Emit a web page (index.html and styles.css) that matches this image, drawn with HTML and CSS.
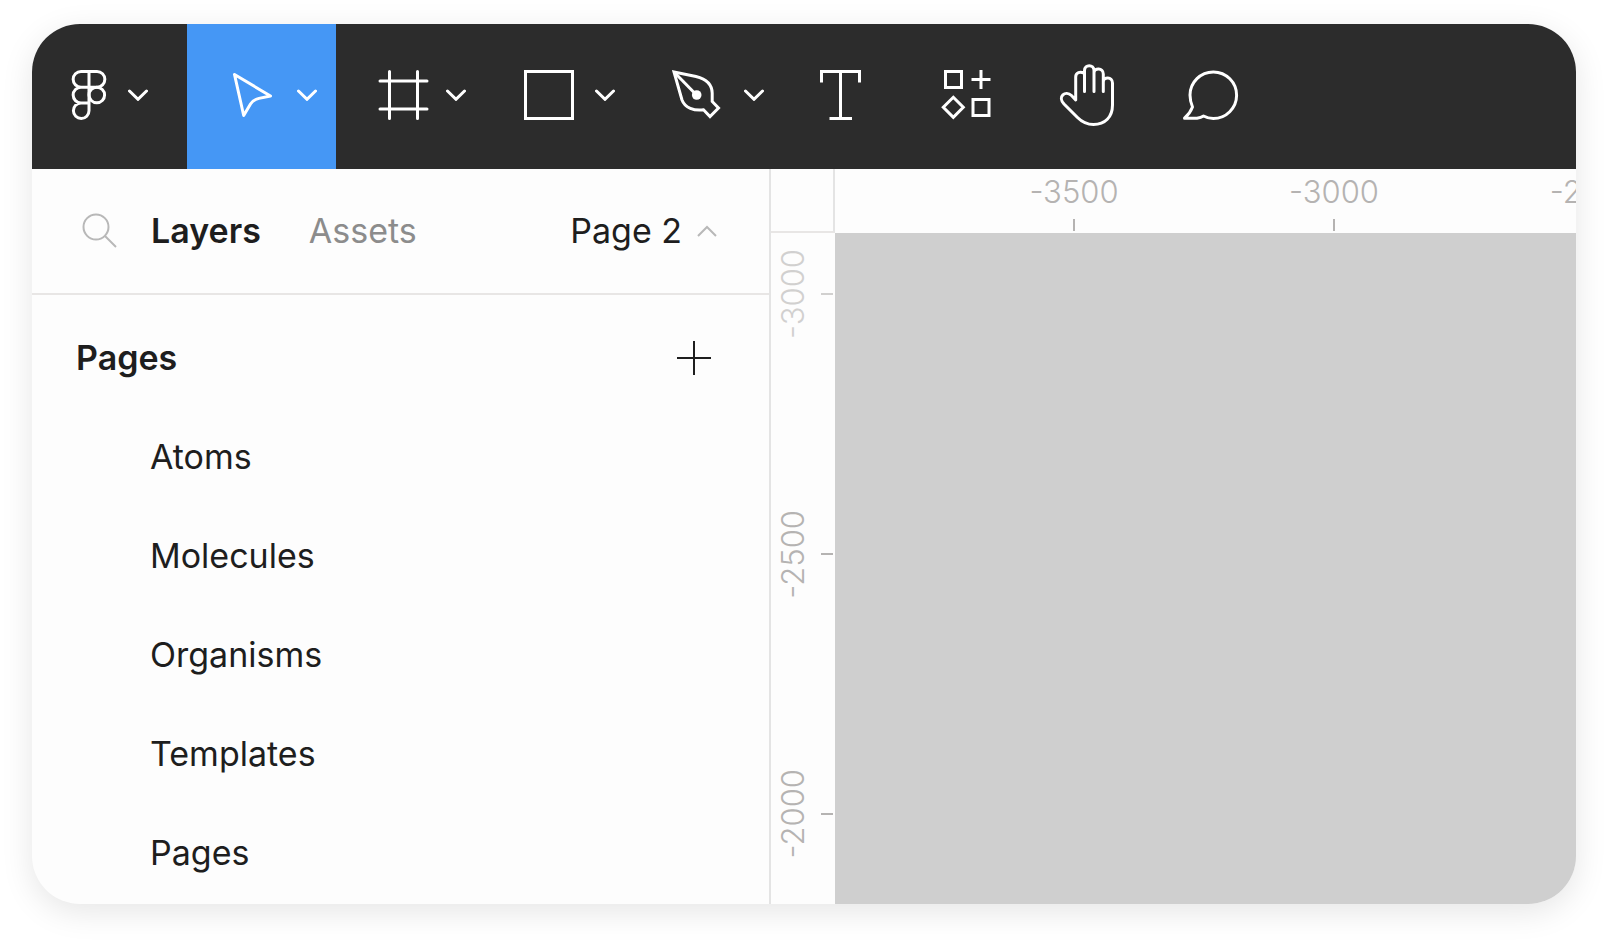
FILE: index.html
```html
<!DOCTYPE html>
<html lang="en">

<head>
    <meta charset="UTF-8">
    <meta name="viewport" content="width=device-width, initial-scale=1.0">
    <title>Design editor</title>
    <link rel="stylesheet" href="styles.css">
</head>

<body>
    <div class="window">
        <header class="toolbar">
            <button class="tool menu" aria-label="Main menu">
                <svg class="icon" viewBox="0 0 52 64">
                    <path d="M26 8.5H18a7.8 7.8 0 0 0 0 15.7H26zM26 8.5H34a7.8 7.8 0 0 1 0 15.7H26zM26 24.2H18a7.8 7.8 0 0 0 0 15.7H26zM26 39.9H18a7.8 7.8 0 1 0 8 7.8z" />
                    <circle cx="33.8" cy="32" r="7.8" />
                </svg>
                <svg class="chevron" viewBox="0 0 20 12"><path d="M1.5 2L10 10.3L18.5 2" /></svg>
            </button>
            <button class="tool active" aria-label="Move">
                <svg class="icon" viewBox="0 0 64 64">
                    <path d="M14.5 11.5L50.5 33L39 35.4Q33.5 36.5 30.5 41L23.7 52.5Z" />
                </svg>
                <svg class="chevron" viewBox="0 0 20 12"><path d="M1.5 2L10 10.3L18.5 2" /></svg>
            </button>
            <button class="tool" aria-label="Frame">
                <svg class="icon" viewBox="0 0 64 64">
                    <path d="M20.5 8.5V55.5M48.5 8.5V55.5M11 18H58M11 46H58" />
                </svg>
                <svg class="chevron" viewBox="0 0 20 12"><path d="M1.5 2L10 10.3L18.5 2" /></svg>
            </button>
            <button class="tool" aria-label="Rectangle">
                <svg class="icon sharp" viewBox="0 0 64 64">
                    <rect x="7.5" y="8.5" width="47" height="47" />
                </svg>
                <svg class="chevron" viewBox="0 0 20 12"><path d="M1.5 2L10 10.3L18.5 2" /></svg>
            </button>
            <button class="tool" aria-label="Pen">
                <svg class="icon sharp" viewBox="0 0 64 64">
                    <path d="M7 9L29 13.5C39 16 45 22 45.2 30V38.5L51.5 45L43 53.5L36.5 46.8C27 48 18 45 15 37Z" />
                    <path d="M7 9L29 31.5" />
                    <circle class="dot" cx="29.7" cy="32" r="4.8" />
                </svg>
                <svg class="chevron" viewBox="0 0 20 12"><path d="M1.5 2L10 10.3L18.5 2" /></svg>
            </button>
            <button class="tool plain" aria-label="Text">
                <svg class="icon sharp" viewBox="0 0 64 64">
                    <path d="M9.5 19.5V8.5H47.5V19.5M28.5 8.5V55.5M17.5 55.5H40" />
                </svg>
            </button>
            <button class="tool plain" aria-label="Resources">
                <svg class="icon sharp" viewBox="0 0 64 64">
                    <rect x="11.5" y="8.5" width="16" height="16" />
                    <rect x="39" y="36.5" width="16" height="16" />
                    <path d="M47 7V26M37.5 16.5H56.5M19.3 34.3L29.3 44.3L19.3 54.3L9.3 44.3Z" />
                </svg>
            </button>
            <button class="tool plain" aria-label="Hand">
                <svg class="icon" viewBox="0 0 64 64">
                    <path d="M28.5 28.5V7.5C28.5 1 38 1 38 7.5V28.5M38 10C38 4.5 47.3 4.5 47.3 11V28.5M47.3 19C47.3 13.5 56.5 13.5 56.5 20V42C56.5 54 49 61.5 37.5 61.5C30 61.5 26 59 21.5 54.5L8 41C1 33.5 9.5 27 15.5 32.5L19.7 37V14C19.7 9.5 24 8 28.5 10.5" />
                </svg>
            </button>
            <button class="tool plain" aria-label="Comment">
                <svg class="icon" viewBox="0 0 64 64">
                    <path d="M14.5 44Q12 38 12 32A23.3 23.3 0 1 1 35.3 55.5Q30 55.5 25.5 53Q23 54.5 19 55.2H6.5Q12 50.5 14.5 44Z" />
                </svg>
            </button>
        </header>

        <main class="workspace">
            <aside class="sidebar">
                <nav class="tabs">
                    <button class="search" aria-label="Search">
                        <svg viewBox="0 0 36 36"><circle cx="14" cy="14" r="12.5" /><path d="M23 23L34 34" /></svg>
                    </button>
                    <button class="tab selected">Layers</button>
                    <button class="tab">Assets</button>
                    <button class="tab page-switch">Page 2
                        <svg class="chevron" viewBox="0 0 20 12"><path d="M1 11L10 2L19 11" /></svg>
                    </button>
                </nav>
                <section class="pages">
                    <div class="pages-head">
                        <h2>Pages</h2>
                        <button class="add" aria-label="Add page">
                            <svg viewBox="0 0 34 34"><path d="M17 0V34M0 17H34" /></svg>
                        </button>
                    </div>
                    <ul class="page-list">
                        <li><a href="#atoms">Atoms</a></li>
                        <li><a href="#molecules">Molecules</a></li>
                        <li><a href="#organisms">Organisms</a></li>
                        <li><a href="#templates">Templates</a></li>
                        <li><a href="#pages">Pages</a></li>
                    </ul>
                </section>
            </aside>

            <section class="board">
                <div class="corner"></div>
                <div class="ruler ruler-x">
                    <span class="mark">-3500</span>
                    <span class="mark">-3000</span>
                    <span class="mark">-2500</span>
                </div>
                <div class="ruler ruler-y">
                    <span class="mark faded"><span class="turned">-3000</span></span>
                    <span class="mark"><span class="turned">-2500</span></span>
                    <span class="mark"><span class="turned">-2000</span></span>
                </div>
                <div class="canvas"></div>
            </section>
        </main>
    </div>
</body>

</html>
```
FILE: styles.css
```css
* {
    box-sizing: border-box;
}

body {
    margin: 0;
    height: 100vh;
    padding: 24px 32px 40px;
    background-color: #fff;
    color: #1e1e1e;
    font-family: Inter, "Liberation Sans", sans-serif;
    font-size: 34px;
    line-height: 40px;
}

button {
    border: none;
    padding: 0;
    background: transparent;
    color: inherit;
    font: inherit;
    cursor: pointer;
}

svg {
    display: block;
    flex: none;
    fill: none;
    stroke: currentColor;
    stroke-width: 3px;
}

.window {
    display: flex;
    flex-direction: column;
    height: 100%;
    border-radius: 48px;
    overflow: hidden;
    background-color: #fdfdfd;
    box-shadow: 0 8px 32px rgba(0, 0, 0, 0.1);
}

/* toolbar */
.toolbar {
    display: flex;
    flex: none;
    height: 145px;
    background-color: #2c2c2c;
    color: #fff;
}

.tool {
    display: flex;
    flex: none;
    align-items: center;
    gap: 13px;
    width: 149px;
    padding: 0 0 3px 33px;
}

.tool.menu {
    width: 155px;
    padding-left: 31px;
}

.tool.active {
    background-color: #4597f5;
}

.tool.plain {
    width: 122px;
    padding-left: 29px;
}

.icon {
    width: 64px;
    height: 64px;
    stroke-linecap: round;
    stroke-linejoin: round;
}

.menu .icon {
    width: 52px;
}

.sharp {
    stroke-linecap: butt;
    stroke-linejoin: miter;
}

.dot {
    fill: currentColor;
    stroke: none;
}

.chevron {
    width: 20px;
    height: 12px;
    stroke-linecap: round;
}

/* left panel */
.workspace {
    display: flex;
    flex: 1;
    min-height: 0;
}

.sidebar {
    flex: none;
    width: 739px;
    border-right: 2px solid #e4e4e4;
}

.tabs {
    display: flex;
    align-items: center;
    height: 126px;
    padding: 0 20px 0 50px;
    border-bottom: 2px solid #e8e6e5;
}

.search {
    margin-right: 33px;
    color: #b8b8b8;
}

.search svg {
    width: 36px;
    height: 36px;
    stroke-width: 2px;
}

.tab {
    margin-right: 48px;
    color: #8c8c8c;
}

.tab.selected {
    color: #1e1e1e;
    font-weight: 600;
}

.page-switch {
    display: flex;
    align-items: center;
    gap: 15px;
    margin: 0 32px 0 auto;
    color: #1e1e1e;
}

.page-switch .chevron {
    color: #b8b8b8;
    stroke-width: 2px;
    stroke-linecap: butt;
}

.pages {
    padding: 13px 58px 0 44px;
}

.pages-head {
    display: flex;
    align-items: center;
    justify-content: space-between;
    height: 99px;
}

.pages-head h2 {
    margin: 0;
    font-size: 34px;
    font-weight: 600;
}

.add svg {
    width: 34px;
    height: 34px;
    stroke-width: 2px;
}

.page-list {
    margin: 0;
    padding: 0 0 0 74px;
    list-style: none;
}

.page-list a {
    display: block;
    color: inherit;
    line-height: 99px;
    text-decoration: none;
}

/* rulers and canvas */
.board {
    display: grid;
    flex: 1;
    grid-template-columns: 64px 1fr;
    grid-template-rows: 64px 1fr;
    min-width: 0;
}

.corner {
    border-right: 2px solid #e4e4e4;
    border-bottom: 2px solid #e8e6e5;
}

.ruler {
    display: flex;
    min-width: 0;
    min-height: 0;
    overflow: hidden;
    color: #b5b3b2;
    font-size: 31px;
    font-weight: 300;
}

.mark {
    display: flex;
    flex: none;
    align-items: center;
    justify-content: space-between;
}

.mark::after {
    content: "";
    background-color: #b5b3b2;
}

.ruler-x {
    padding-left: 109px;
}

.ruler-x .mark {
    flex-direction: column;
    width: 260px;
    padding: 3px 0 2px;
}

.ruler-x .mark::after {
    width: 2px;
    height: 12px;
}

.ruler-y {
    flex-direction: column;
}

.ruler-y .mark {
    height: 260px;
    padding: 0 2px;
}

/* the first mark starts above the visible part of the ruler */
.ruler-y .mark:first-child {
    margin-top: -69px;
}

.ruler-y .mark::after {
    width: 12px;
    height: 2px;
}

.turned {
    writing-mode: vertical-rl;
    transform: rotate(180deg);
}

.faded {
    opacity: 0.6;
}

.canvas {
    background-color: #cfcfcf;
}
```
